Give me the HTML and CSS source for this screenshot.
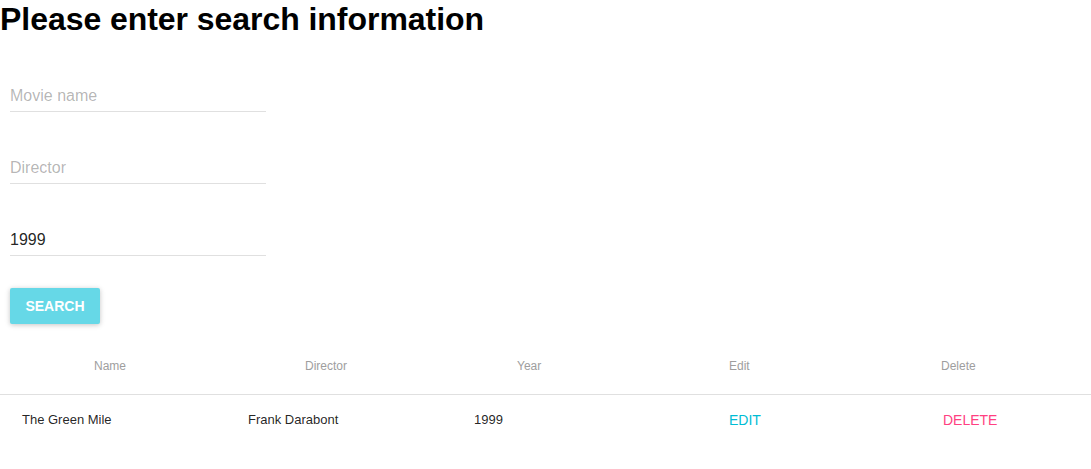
FILE: index.html
```html
<!DOCTYPE html>
<html lang="en">
<head>
<meta charset="utf-8">
<title>Movie search</title>
<link rel="stylesheet" href="styles.css">
</head>
<body>
  <h1 class="title">Please enter search information</h1>
  <form class="search-form">
    <div class="field"><input class="field-input" type="text" placeholder="Movie name"></div>
    <div class="field"><input class="field-input" type="text" placeholder="Director"></div>
    <div class="field"><input class="field-input" type="text" value="1999"></div>
    <button class="search-btn" type="button">Search</button>
  </form>
  <div class="table">
    <div class="thead">
      <div class="th">Name</div>
      <div class="th">Director</div>
      <div class="th">Year</div>
      <div class="th">Edit</div>
      <div class="th">Delete</div>
    </div>
    <div class="trow">
      <div class="td">The Green Mile</div>
      <div class="td">Frank Darabont</div>
      <div class="td">1999</div>
      <div class="td"><button class="flat-btn edit" type="button">Edit</button></div>
      <div class="td"><button class="flat-btn delete" type="button">Delete</button></div>
    </div>
  </div>
</body>
</html>
```
FILE: styles.css
```css
html, body {
  margin: 0;
  padding: 0;
  background: #ffffff;
  font-family: "Liberation Sans", Arial, Helvetica, sans-serif;
  color: #000;
}
.title {
  margin: 0;
  padding-top: 1px;
  font-size: 32px;
  font-weight: bold;
  line-height: 37px;
  letter-spacing: -0.05px;
}
.search-form {
  margin: 34px 0 0 10px;
  display: flex;
  flex-direction: column;
  align-items: flex-start;
}
.field {
  width: 256px;
  height: 48px;
  padding-top: 8px;
  box-sizing: border-box;
  margin-bottom: 24px;
}
.field-input {
  display: block;
  width: 100%;
  height: 32px;
  box-sizing: border-box;
  border: none;
  border-bottom: 1px solid #e0e0e0;
  outline: none;
  padding: 0;
  margin: 0;
  font-family: inherit;
  font-size: 16px;
  color: rgba(0,0,0,0.87);
  background: transparent;
}
.field-input::placeholder {
  color: rgba(0,0,0,0.3);
}
.search-btn {
  width: 90px;
  height: 36px;
  padding: 0;
  border: none;
  border-radius: 2px;
  background: #66d8e7;
  color: #fff;
  font-family: inherit;
  font-size: 14px;
  font-weight: bold;
  text-transform: uppercase;
  box-shadow: 0 1px 6px rgba(0,0,0,0.12), 0 1px 4px rgba(0,0,0,0.12);
}
.table {
  margin-top: 14px;
  width: 100%;
}
.thead {
  display: grid;
  grid-template-columns: 211px 212px 212px 212px 1fr;
  padding-left: 94px;
  height: 56px;
  align-items: center;
  border-bottom: 1px solid #e0e0e0;
}
.th {
  font-size: 12px;
  color: #9e9e9e;
}
.trow {
  display: grid;
  grid-template-columns: 226px 226px 255px 214px 1fr;
  padding-left: 22px;
  height: 48px;
  align-items: center;
}
.td {
  font-size: 13px;
  color: rgba(0,0,0,0.87);
}
.flat-btn {
  border: none;
  background: transparent;
  padding: 2px 0 0;
  font-family: inherit;
  font-size: 14px;
  text-transform: uppercase;
}
.edit { color: #00bcd4; }
.delete { color: #ff4081; }
```
